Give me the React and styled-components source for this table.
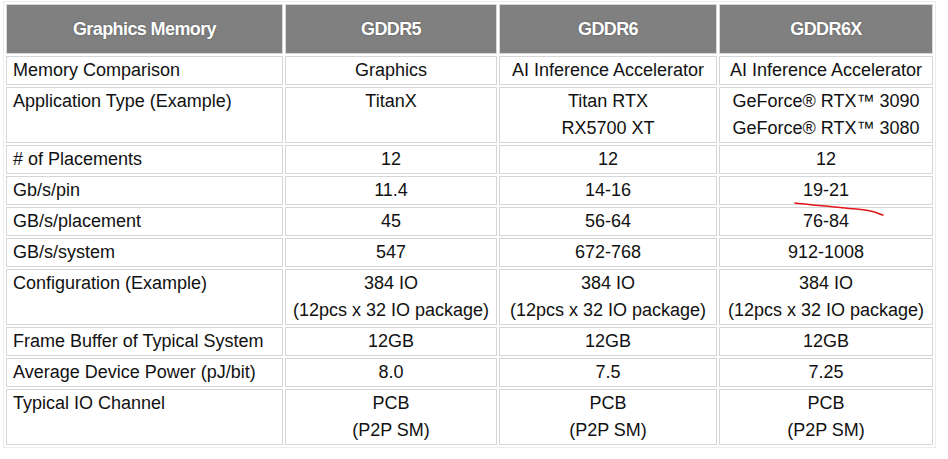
import React from 'react'
import styled, { createGlobalStyle } from 'styled-components'

const GlobalStyle = createGlobalStyle`
    html, body {
        margin: 0;
        padding: 0;
        background: #fff;
    }
`

const Page = styled.div`
    position: relative;
    padding: 1px 0 0 3px;
    width: 948px;
    height: 459px;
    box-sizing: border-box;
    font-family: "Liberation Sans", Arial, Helvetica, sans-serif;
`

const Table = styled.table`
    width: 933px;
    table-layout: fixed;
    border-collapse: separate;
    border-spacing: 2px;
    border: 1px solid #ececec;
    font-size: 18px;
    line-height: 27px;
    color: #111;
`

const HeadCell = styled.th`
    height: 48px;
    padding: 0;
    background: #808080;
    border: 1px solid #d8d8d8;
    color: #fff;
    font-weight: bold;
    font-size: 18px;
    letter-spacing: -0.6px;
    text-align: center;
    vertical-align: middle;
    text-shadow: 0 0 2px rgba(0, 0, 0, 0.35);
`

const Cell = styled.td`
    padding: 0 4px 0 ${({ $label }) => ($label ? '6px' : '4px')};
    border: 1px solid #d6d6d6;
    text-align: ${({ $label }) => ($label ? 'left' : 'center')};
    vertical-align: top;
    white-space: nowrap;
`

const Line = styled.div`
    height: 27px;
`

const Scribble = styled.svg`
    position: absolute;
    left: 0;
    top: 0;
    pointer-events: none;
`

const columns = [
    { title: 'Graphics Memory', width: 277 },
    { title: 'GDDR5', width: 212 },
    { title: 'GDDR6', width: 218 },
    { title: 'GDDR6X', width: 214 },
]

const rows = [
    ['Memory Comparison', ['Graphics'], ['AI Inference Accelerator'], ['AI Inference Accelerator']],
    ['Application Type (Example)', ['TitanX'], ['Titan RTX', 'RX5700 XT'], ['GeForce® RTX™ 3090', 'GeForce® RTX™ 3080']],
    ['# of Placements', ['12'], ['12'], ['12']],
    ['Gb/s/pin', ['11.4'], ['14-16'], ['19-21']],
    ['GB/s/placement', ['45'], ['56-64'], ['76-84']],
    ['GB/s/system', ['547'], ['672-768'], ['912-1008']],
    ['Configuration (Example)', ['384 IO', '(12pcs x 32 IO package)'], ['384 IO', '(12pcs x 32 IO package)'], ['384 IO', '(12pcs x 32 IO package)']],
    ['Frame Buffer of Typical System', ['12GB'], ['12GB'], ['12GB']],
    ['Average Device Power (pJ/bit)', ['8.0'], ['7.5'], ['7.25']],
    ['Typical IO Channel', ['PCB', '(P2P SM)'], ['PCB', '(P2P SM)'], ['PCB', '(P2P SM)']],
]

const App = () => {
    return (
        <>
            <GlobalStyle />
            <Page>
                <Table>
                    <colgroup>
                        {columns.map((col) => (
                            <col key={col.title} style={{ width: col.width }} />
                        ))}
                    </colgroup>
                    <thead>
                        <tr>
                            {columns.map((col) => (
                                <HeadCell key={col.title}>{col.title}</HeadCell>
                            ))}
                        </tr>
                    </thead>
                    <tbody>
                        {rows.map(([label, ...values]) => {
                            const lines = Math.max(...values.map((v) => v.length))
                            return (
                                <tr key={label}>
                                    <Cell $label>
                                        <Line>{label}</Line>
                                        {lines > 1 && <Line />}
                                    </Cell>
                                    {values.map((value, i) => (
                                        <Cell key={i}>
                                            {value.map((text) => (
                                                <Line key={text}>{text}</Line>
                                            ))}
                                        </Cell>
                                    ))}
                                </tr>
                            )
                        })}
                    </tbody>
                </Table>
                <Scribble width="948" height="459">
                    <path
                        d="M795 203 C812 205, 835 207, 856 209 S876 213, 883 215"
                        fill="none"
                        stroke="#e3161b"
                        strokeWidth="1.6"
                        strokeLinecap="round"
                    />
                </Scribble>
            </Page>
        </>
    )
}

export default App
